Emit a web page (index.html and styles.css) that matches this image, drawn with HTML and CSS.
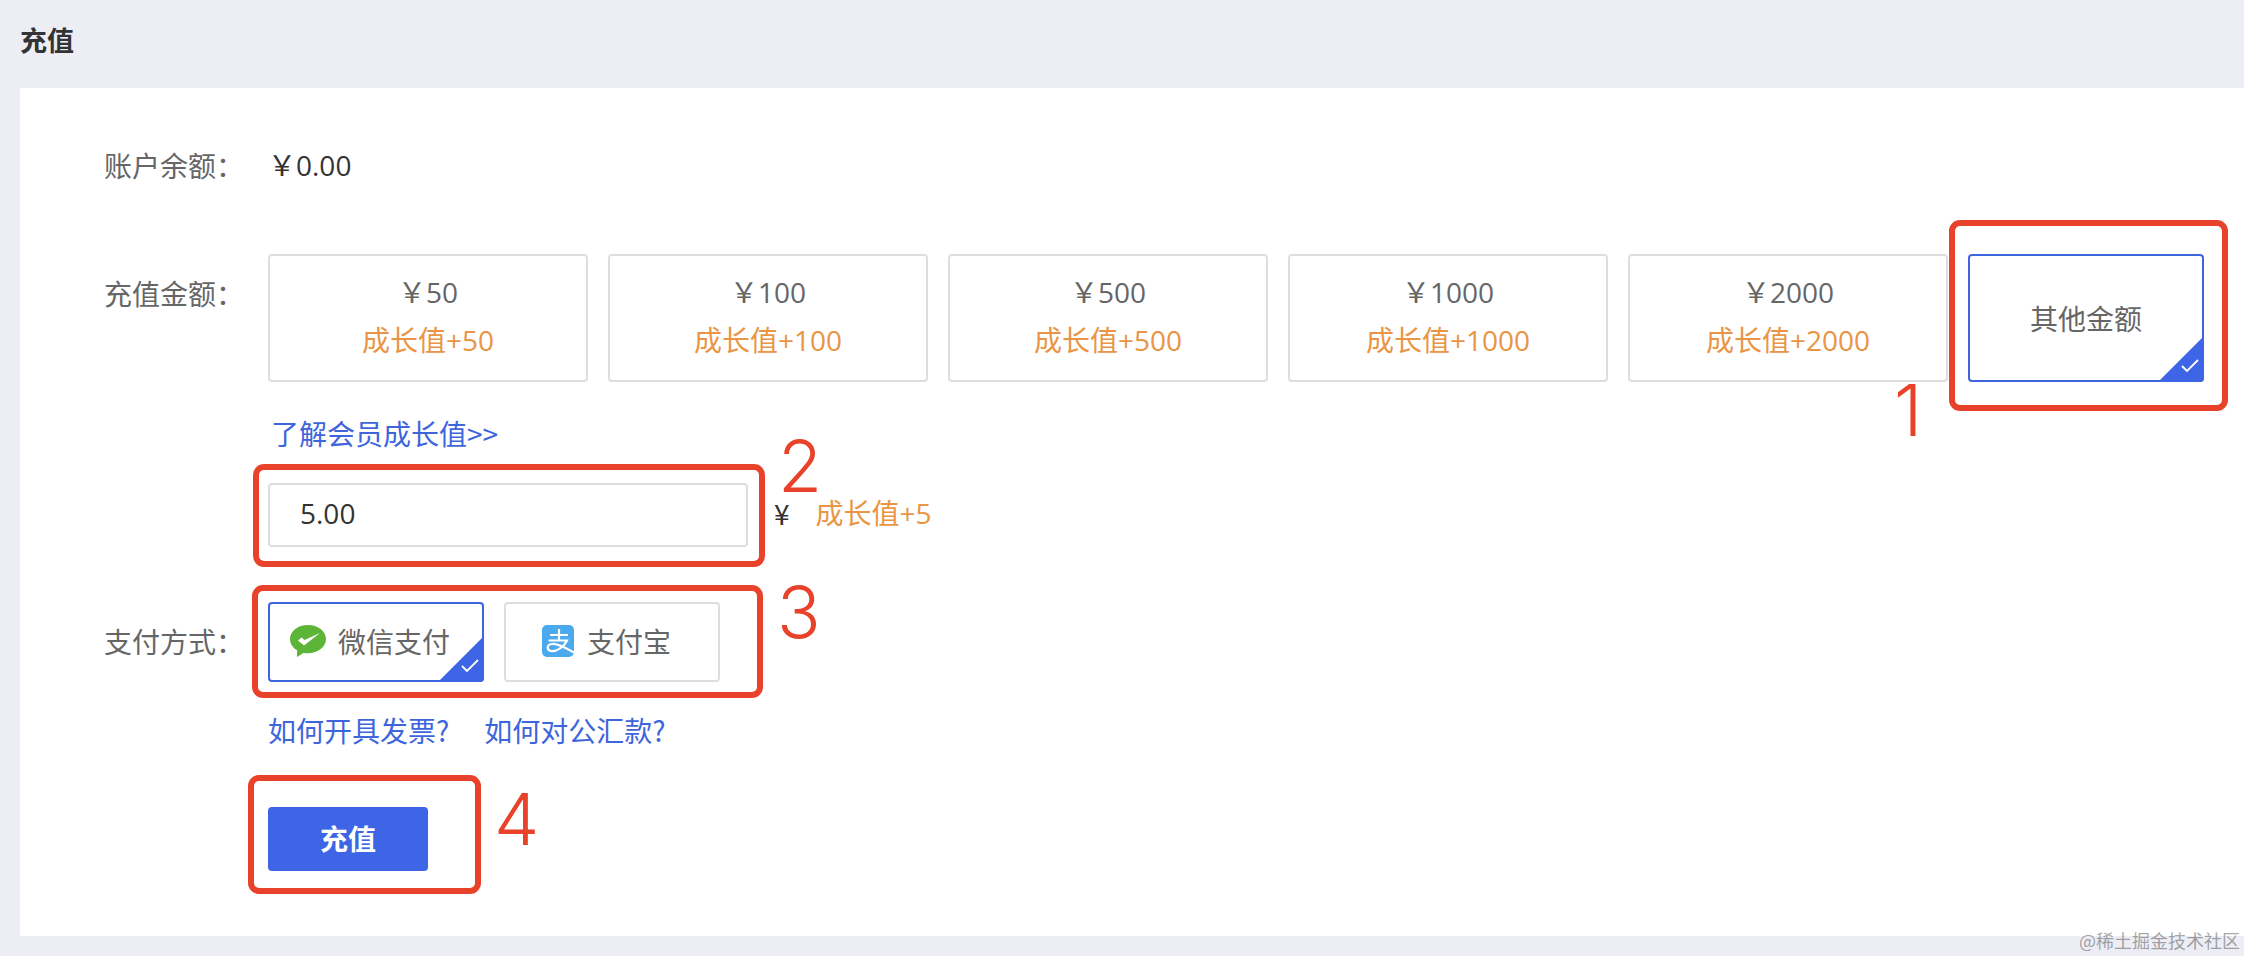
FILE: index.html
```html
<!DOCTYPE html>
<html lang="zh-CN">
<head>
<meta charset="utf-8">
<title>充值</title>
<link rel="stylesheet" href="styles.css">
</head>
<body>
<div class="page">
  <header class="page-head"><h1 class="page-title">充值</h1></header>
  <main class="panel">
    <div class="row row-balance">
      <div class="label">账户余额：</div>
      <div class="balance num-text">￥0.00</div>
    </div>
    <div class="row row-amount">
      <div class="label label-amount">充值金额：</div>
      <div class="content">
        <div class="cards">
          <div class="card"><div class="price num-text">￥50</div><div class="growth num-text">成长值+50</div></div>
          <div class="card"><div class="price num-text">￥100</div><div class="growth num-text">成长值+100</div></div>
          <div class="card"><div class="price num-text">￥500</div><div class="growth num-text">成长值+500</div></div>
          <div class="card"><div class="price num-text">￥1000</div><div class="growth num-text">成长值+1000</div></div>
          <div class="card"><div class="price num-text">￥2000</div><div class="growth num-text">成长值+2000</div></div>
          <div class="card card-other selected"><div class="price">其他金额</div>
            <span class="corner"><svg viewBox="0 0 46 46" width="46" height="46"><path d="M46 0V42a4 4 0 0 1-4 4H0Z" fill="#3e65e6"/><path d="M24 30l5 5L40 24" fill="none" stroke="#fff" stroke-width="1.800"/></svg></span>
          </div>
        </div>
        <a class="link link-grow" href="#">了解会员成长值&gt;&gt;</a>
        <div class="custom">
          <input class="amount-input num-text" type="text" value="5.00">
          <span class="unit">¥</span>
          <span class="growth custom-growth num-text">成长值+5</span>
        </div>
      </div>
    </div>
    <div class="row row-pay">
      <div class="label label-pay">支付方式：</div>
      <div class="content">
        <div class="pays">
          <div class="pay pay-wechat selected">
            <svg class="icon-wechat" viewBox="0 0 36 32" width="36" height="32"><path d="M18 0C8 0 0 6.200 0 14c0 4.700 2.800 8.800 7.100 11.300L7 32l6.500-4.100c1.500.3 3 .4 4.500.4 10 0 18-6.300 18-14.200S28 0 18 0Z" fill="#5cb536"/><path d="M8 15.500L11.500 12.500 14.500 15 30 8 14 20.500Z" fill="#fff"/></svg>
            <span>微信支付</span>
            <span class="corner"><svg viewBox="0 0 46 46" width="46" height="46"><path d="M46 0V42a4 4 0 0 1-4 4H0Z" fill="#3e65e6"/><path d="M24 30l5 5L40 24" fill="none" stroke="#fff" stroke-width="1.800"/></svg></span>
          </div>
          <div class="pay pay-alipay">
            <svg class="icon-alipay" viewBox="0 0 32 32" width="32" height="32"><rect width="32" height="32" rx="5" fill="#4ba9ee"/><path d="M8 10H26M17 4V15.500M6.500 15.500H25C22 22 14 27 9 26 4.500 25 4.500 19.500 10 19 15 18.500 24 23 32 27.500" fill="none" stroke="#fff" stroke-width="2.200"/></svg>
            <span>支付宝</span>
          </div>
        </div>
        <div class="help">
          <a class="link" href="#">如何开具发票?</a>
          <a class="link" href="#">如何对公汇款?</a>
        </div>
        <button class="submit" type="button">充值</button>
      </div>
    </div>
  </main>

  <div class="mark box-1"></div><div class="mark box-2"></div><div class="mark box-3"></div><div class="mark box-4"></div>
  <span class="num num-1">1</span><span class="num num-2">2</span><span class="num num-3">3</span><span class="num num-4">4</span>
  <span class="watermark">@稀土掘金技术社区</span>
</div>
</body>
</html>
```
FILE: styles.css
```css
* { box-sizing: border-box; }
html, body { margin: 0; padding: 0; }
body {
  background: #ecedf5;
  font-family: "Noto Sans CJK SC", "Noto Sans", sans-serif;
  font-size: 28px;
  color: #666;
}
.page { position: relative; width: 2244px; height: 956px; overflow: hidden; }
.page-head { height: 88px; display: flex; align-items: center; padding: 0 0 8px 20px; }
.page-title { margin: 0; font-size: 27px; font-weight: 700; color: #333; line-height: 40px; }
.panel { margin-left: 20px; height: 848px; background: #fff; padding: 57px 0 0 84px; }
.row { display: flex; }
.label { width: 164px; flex: none; line-height: 40px; color: #666; font-size: 28px; }
.label-amount { padding-top: 19px; }
.label-pay { padding-top: 19px; }
.num-text { font-family: "Open Sans", "Noto Sans CJK SC", sans-serif; }
.balance { line-height: 40px; color: #333; }
.row-amount { margin-top: 69px; }
.content { display: flex; flex-direction: column; align-items: flex-start; }
.cards { display: flex; gap: 20px; }
.card {
  position: relative; width: 320px; height: 128px;
  border: 2px solid #ddd; border-radius: 4px;
  display: flex; flex-direction: column; align-items: center; padding-top: 16px;
}
.price { line-height: 40px; color: #666; }
.growth { color: #e99544; line-height: 40px; }
.card .growth { margin-top: 8px; }
.card-other { width: 236px; justify-content: center; padding-top: 0; }
.selected { border-color: #3e65e0; }
.corner { position: absolute; right: -2px; bottom: -2px; width: 46px; height: 46px; display: block; }
.corner svg { display: block; }
.link { color: #3e65dc; text-decoration: none; line-height: 40px; }
.link-grow { margin-top: 31px; margin-left: 3px; }
.custom { display: flex; align-items: center; margin-top: 30px; }
.amount-input {
  width: 480px; height: 64px; border: 2px solid #ddd; border-radius: 4px;
  padding: 0 0 4px 30px; font-size: 28px; color: #333; background: #fff; outline: none;
}
.unit { margin-left: 26px; color: #333; margin-bottom: 5px; line-height: 34px; }
.custom-growth { margin-left: 26px; margin-bottom: 5px; }
.row-pay { margin-top: 55px; }
.pays { display: flex; gap: 20px; }
.pay {
  position: relative; width: 216px; height: 80px;
  border: 2px solid #ddd; border-radius: 4px;
  display: flex; align-items: center; gap: 12px; color: #666; padding-bottom: 2px;
}
.pay-wechat { padding-left: 20px; }
.pay-alipay { padding-left: 36px; gap: 13px; }
.pay.selected { border-color: #3e65e0; }
.icon-wechat, .icon-alipay { flex: none; }
.help { display: flex; gap: 35px; margin-top: 28px; }
.submit {
  margin-top: 57px; width: 160px; height: 64px; border: 0; border-radius: 4px;
  background: #3e65e6; color: #fff; font: inherit; font-weight: 700; padding: 0 0 2px;
}
.mark { position: absolute; border: 6px solid #e8432a; border-radius: 11px; }
.box-1 { left: 1949px; top: 220px; width: 279px; height: 191px; }
.box-2 { left: 253px; top: 464px; width: 512px; height: 103px; }
.box-3 { left: 252px; top: 585px; width: 511px; height: 113px; }
.box-4 { left: 248px; top: 775px; width: 233px; height: 119px; }
.num {
  position: absolute; font-family: Inter, "Liberation Sans", sans-serif; font-weight: 300;
  font-size: 72px; line-height: 52px; color: #e8432a;
}
.num-1 { left: 1894px; top: 384px; }
.num-2 { left: 778px; top: 440px; }
.num-3 { left: 777px; top: 586px; }
.num-4 { left: 494px; top: 793px; }
.watermark {
  position: absolute; left: 2079px; top: 928px; font-size: 18px; line-height: 24px;
  color: rgba(90, 90, 90, .55);
}
```
